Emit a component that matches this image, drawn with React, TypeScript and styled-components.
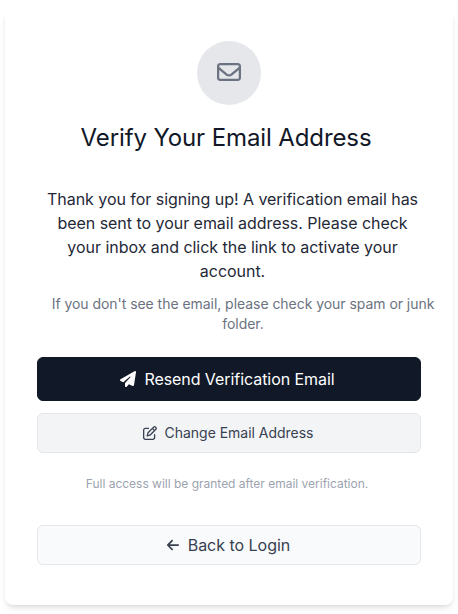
import React from "react";
import styled, { createGlobalStyle } from "styled-components";
import { FaRegEnvelope, FaPaperPlane, FaRegPenToSquare, FaArrowLeft } from "react-icons/fa6";

const GlobalStyle = createGlobalStyle`
  *, *::before, *::after { box-sizing: border-box; }
  body { margin: 0; background: #fff; font-family: Inter, sans-serif; overflow: hidden; }
  h1, p { margin: 0; font-weight: 400; }
`;

const Page = styled.main`
  height: 614px;
  padding: 9px 5px;
`;

const Card = styled.section`
  height: 596px;
  padding: 32px;
  border-radius: 8px;
  background: #fff;
  box-shadow: 0 4px 6px -1px rgba(0, 0, 0, 0.1), 0 2px 4px -2px rgba(0, 0, 0, 0.1);
  display: flex;
  flex-direction: column;
  text-align: center;
`;

const IconCircle = styled.div`
  flex: none;
  width: 64px;
  height: 64px;
  margin: 0 auto 17px;
  border-radius: 50%;
  background: #e5e7eb;
  color: #6b7280;
  display: flex;
  align-items: center;
  justify-content: center;

  svg { margin-bottom: 2px; }
`;

const Title = styled.h1`
  font-size: 24px;
  line-height: 32px;
  letter-spacing: -0.11px;
  color: #111827;
  margin: 0 6px 33px 0;
  white-space: nowrap;
`;

const Message = styled.p`
  margin: 0 0 11px 7px;
  font-size: 16px;
  line-height: 24px;
  letter-spacing: -0.035px;
  color: #1f2937;
  white-space: nowrap;
`;

const Hint = styled.p`
  margin: 0 -14px 23px 14px;
  font-size: 14px;
  line-height: 20px;
  letter-spacing: -0.045px;
  color: #6b7280;
  white-space: nowrap;
`;

const Button = styled.button<{ $tone: "primary" | "muted" | "plain"; $size: number }>`
  flex: none;
  width: 100%;
  height: ${(p) => (p.$tone === "primary" ? 44 : 40)}px;
  padding: 0 ${(p) => (p.$tone === "primary" ? 3 : 2)}px 0 0;
  border: 1px solid ${(p) => (p.$tone === "primary" ? "#111827" : "#e5e7eb")};
  border-radius: 6px;
  background: ${(p) => ({ primary: "#111827", muted: "#f3f4f6", plain: "#f9fafb" })[p.$tone]};
  color: ${(p) => (p.$tone === "primary" ? "#fff" : "#374151")};
  font: 400 ${(p) => p.$size}px/24px Inter, sans-serif;
  letter-spacing: ${(p) => (p.$tone === "primary" ? -0.06 : -0.02)}px;
  display: flex;
  align-items: center;
  justify-content: center;
  gap: 8px;
  white-space: nowrap;
`;

const Actions = styled.div`
  display: flex;
  flex-direction: column;
  gap: 12px;
`;

const Note = styled.p`
  margin: 23px 4px 33px 0;
  font-size: 12px;
  line-height: 16px;
  letter-spacing: -0.01px;
  color: #9ca3af;
`;

export default function App() {
  return (
    <>
      <GlobalStyle />
      <Page>
        <Card>
          <IconCircle><FaRegEnvelope size={24} /></IconCircle>
          <Title>Verify Your Email Address</Title>
          <Message>
            Thank you for signing up! A verification email has<br />
            been sent to your email address. Please check<br />
            your inbox and click the link to activate your<br />
            account.
          </Message>
          <Hint>
            If you don't see the email, please check your spam or junk<br />
            folder.
          </Hint>
          <Actions>
            <Button $tone="primary" $size={16}>
              <FaPaperPlane size={16} />
              <span>Resend Verification Email</span>
            </Button>
            <Button $tone="muted" $size={14}>
              <FaRegPenToSquare size={14} />
              <span>Change Email Address</span>
            </Button>
          </Actions>
          <Note>Full access will be granted after email verification.</Note>
          <Button $tone="plain" $size={16}>
            <FaArrowLeft size={14} />
            <span>Back to Login</span>
          </Button>
        </Card>
      </Page>
    </>
  );
}
